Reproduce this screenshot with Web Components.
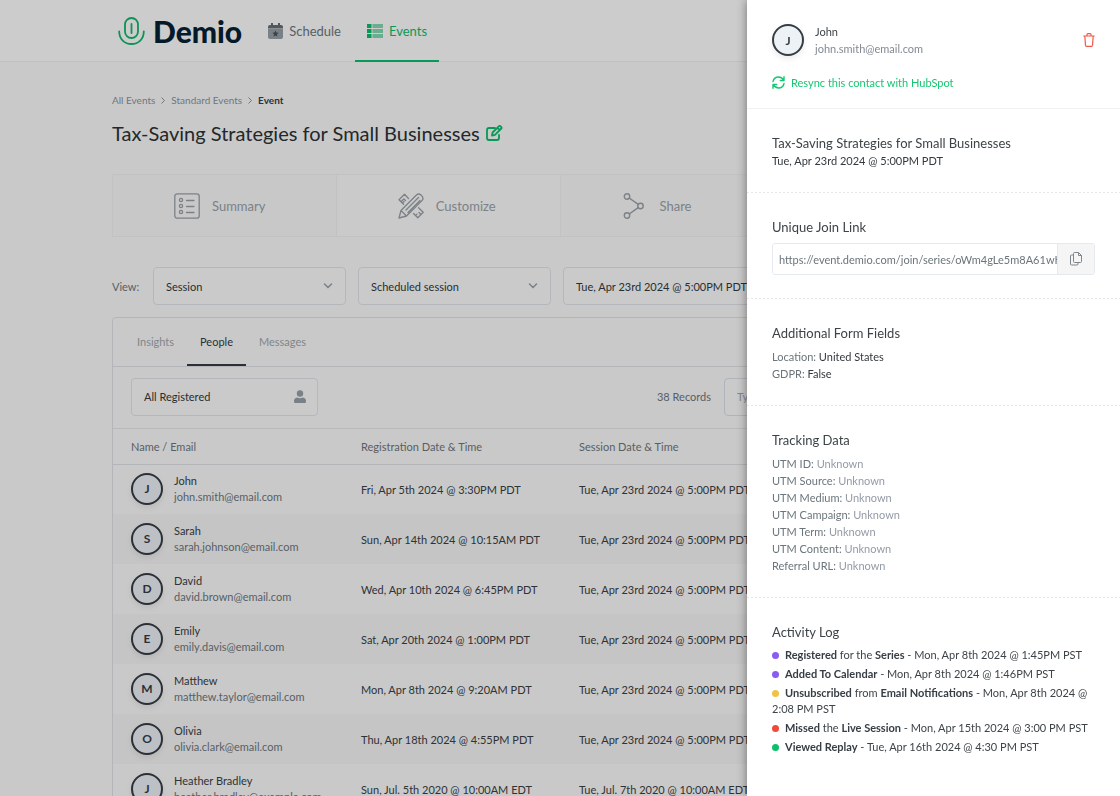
<!DOCTYPE html>
<html lang="en">
<head>
<meta charset="utf-8">
<meta name="viewport" content="width=device-width, initial-scale=1">
<title>Demio – Event</title>
<style>
html, body { margin: 0; height: 100%; }
body { font-family: Lato, "Open Sans", sans-serif; font-size: 11px; color: #3a4045; overflow: hidden; }
</style>
</head>
<body>
<demio-app></demio-app>

<script>
const define = (name, html, setup) => {
  const tpl = document.createElement('template');
  tpl.innerHTML = html;
  customElements.define(name, class extends HTMLElement {
    connectedCallback() {
      if (this.shadowRoot) return;
      const root = this.attachShadow({ mode: 'open' });
      root.append(tpl.content.cloneNode(true));
      if (setup) setup(this, root);
    }
  });
};

define('user-avatar', `
<style>
:host { display: flex; flex: none; align-items: center; justify-content: center; box-sizing: border-box; width: 32px; height: 32px; border: 2px solid #363d44; border-radius: 50%; background: #edf2f7; color: #363d44; font-size: 12px; font-weight: 700; box-shadow: 0 3px 6px rgba(0,0,0,.08); }
</style><slot></slot>`);

define('nav-tab', `
<style>
:host { display: flex; }
a { display: flex; align-items: center; gap: 6px; padding: 2px 12px 0; font-size: 13px; color: #6e777f; text-decoration: none; border-bottom: 2px solid transparent; }
:host([active]) a { color: #0bbf6d; border-color: #0bbf6d; }
</style>
<a href="#"><slot name="icon"></slot><slot></slot></a>`);

define('app-header', `
<style>
:host { display: block; background: #fff; border-bottom: 1px solid #f0f0f0; }
header { display: flex; height: 61px; padding: 0 10%; }
nav { display: flex; gap: 2px; margin: 0 0 -1px 14px; }
.logo { display: flex; align-items: center; gap: 8px; padding-left: 6px; color: #072134; font-size: 30px; font-weight: 900; text-decoration: none; }
</style>
<header>
  <a class="logo" href="#">
    <svg width="27" height="28" viewBox="0 0 27 28" fill="none" stroke="#10b96c" stroke-width="1.800" stroke-linecap="round"><rect x="7" y="1" width="13" height="20" rx="6.500"/><path d="M13.500 7v9M1.200 14.500C1.200 22 6.500 27 13.500 27S25.800 22 25.800 14.500"/></svg>
    <span>Demio</span>
  </a>
  <nav>
    <nav-tab>
      <svg slot="icon" width="15" height="16" viewBox="0 0 15 16"><path fill="#666e76" d="M2 2h1V0h2v2h5V0h2v2h1q2 0 2 2v1.500H0V4q0-2 2-2z"/><path fill="#98a0a8" d="M0 6h15v8q0 2-2 2H2q-2 0-2-2z"/><path fill="#4c545c" d="M7.500 7.600l.95 1.950 2.100.3-1.500 1.500.35 2.100-1.900-1-1.900 1 .35-2.100-1.500-1.500 2.100-.3z"/></svg>
      Schedule
    </nav-tab>
    <nav-tab active>
      <svg slot="icon" width="16" height="14" viewBox="0 0 16 14"><path fill="#0bbf6d" d="M0 0h4.500v4H0zM0 5h4.500v4H0zM0 10h4.500v4H0z"/><path fill="#86d9b3" d="M5.500 0H16v4H5.500zM5.500 5H16v4H5.500zM5.500 10H16v4H5.500z"/></svg>
      Events
    </nav-tab>
  </nav>
</header>`);

define('bread-crumbs', `
<style>
:host { display: block; font-size: 10px; line-height: 16px; color: #8d949c; }
nav { display: flex; align-items: center; gap: 6px; }
a { color: inherit; text-decoration: none; }
b { color: #3a4045; }
</style>
<nav aria-label="Breadcrumb">
  <a href="#">All Events</a>
  <svg width="4" height="7" viewBox="0 0 4 7" fill="none" stroke="#8d949c"><path d="M.5.5l3 3-3 3"/></svg>
  <a href="#">Standard Events</a>
  <svg width="4" height="7" viewBox="0 0 4 7" fill="none" stroke="#8d949c"><path d="M.5.5l3 3-3 3"/></svg>
  <b>Event</b>
</nav>`);

define('step-tile', `
<style>
:host { display: flex; flex: 1; min-width: 0; box-sizing: border-box; border-right: 1px solid #f3f3f4; background: #fafafa; }
:host([plain]) { background: #fdfdfd; }
:host(:last-of-type) { border-right: 0; }
a { flex: 1; display: flex; align-items: center; gap: 12px; min-width: 0; padding-left: 61px; color: #9ba2a9; font-size: 13px; text-decoration: none; }
</style>
<a href="#"><slot name="icon"></slot><slot></slot></a>`);

define('select-field', `
<style>
:host { display: grid; width: 193px; flex: none; }
select { grid-area: 1/1; appearance: none; box-sizing: border-box; width: 100%; height: 38px; padding: 0 12px; font: inherit; color: #33393e; background: #fdfdfd; border: 1px solid #e1e5ea; border-radius: 4px; }
.mark { grid-area: 1/1; justify-self: end; align-self: center; margin-right: 12px; pointer-events: none; display: flex; }
</style>
<select></select>
<span class="mark"><slot name="mark"><svg width="12" height="8" viewBox="0 0 12 8" fill="none" stroke="#9aa1a8" stroke-width="1.500" stroke-linecap="round"><path d="M2.500 2L6 5.500 9.500 2"/></svg></slot></span>`,
(host, root) => {
  const select = root.querySelector('select');
  select.setAttribute('aria-label', host.getAttribute('label'));
  select.add(new Option(host.getAttribute('value')));
});

define('people-table', `
<style>
:host { display: block; }
table { width: 100%; border-collapse: collapse; table-layout: fixed; }
th { height: 35px; padding: 0 0 0 18px; text-align: left; font-weight: 400; color: #6f777e; border-bottom: 1px solid #e1e3e6; }
th:first-child { width: 248px; } th:nth-child(2) { width: 218px; }
th:nth-child(n+2), td:nth-child(n+2) { padding-left: 0; }
th, td { box-sizing: border-box; }
td { height: 50px; padding: 0 0 0 18px; white-space: nowrap; }
td:last-child, th:last-child { padding-right: 18px; }
tbody tr:nth-child(even) { background: #f7f7f7; }
.who { display: flex; align-items: center; gap: 11px; line-height: 16px; }
.who span { display: block; color: #6f777e; }
</style>
<table>
  <thead><tr><th>Name / Email</th><th>Registration Date &amp; Time</th><th>Session Date &amp; Time</th></tr></thead>
  <tbody></tbody>
</table>`,
(host, root) => {
  const usual = 'Tue, Apr 23rd 2024 @ 5:00PM PDT';
  const people = [
    ['J', 'John', 'john.smith@email.com', 'Fri, Apr 5th 2024 @ 3:30PM PDT', usual],
    ['S', 'Sarah', 'sarah.johnson@email.com', 'Sun, Apr 14th 2024 @ 10:15AM PDT', usual],
    ['D', 'David', 'david.brown@email.com', 'Wed, Apr 10th 2024 @ 6:45PM PDT', usual],
    ['E', 'Emily', 'emily.davis@email.com', 'Sat, Apr 20th 2024 @ 1:00PM PDT', usual],
    ['M', 'Matthew', 'matthew.taylor@email.com', 'Mon, Apr 8th 2024 @ 9:20AM PDT', usual],
    ['O', 'Olivia', 'olivia.clark@email.com', 'Thu, Apr 18th 2024 @ 4:55PM PDT', usual],
    ['J', 'Heather Bradley', 'heather.bradley@example.com', 'Sun, Jul. 5th 2020 @ 10:00AM EDT', 'Tue, Jul. 7th 2020 @ 10:00AM EDT']
  ];
  root.querySelector('tbody').innerHTML = people.map(([i, name, mail, reg, ses]) =>
    `<tr><td><div class="who"><user-avatar>${i}</user-avatar><div>${name}<span>${mail}</span></div></div></td><td>${reg}</td><td>${ses}</td></tr>`).join('');
});

define('people-card', `
<style>
:host { display: block; border: 1px solid #e1e3e6; border-radius: 4px 4px 0 0; background: #fcfcfc; }
.tabs { display: flex; height: 48px; padding: 0 11px; border-bottom: 1px solid #e1e3e6; }
.tabs button { font: inherit; color: #a2a8ae; background: none; border: 0; border-bottom: 2px solid transparent; padding: 0 13px; margin: 0; }
.tabs .on { color: #363d44; border-color: #363d44; }
.filter { display: flex; align-items: center; gap: 13px; height: 59px; padding: 0 18px 2px; border-bottom: 1px solid #e6e8ea; }
select-field { width: 187px; margin-right: auto; }
.count { color: #6f777e; }
input { box-sizing: border-box; width: 265px; height: 38px; padding: 0 12px; font: inherit; background: #fdfdfd; border: 1px solid #dbe2ea; border-radius: 4px; }
input::placeholder { color: #a2a8ae; }
</style>
<div class="tabs" role="tablist"><button role="tab">Insights</button><button role="tab" class="on" aria-selected="true">People</button><button role="tab">Messages</button></div>
<div class="filter">
  <select-field label="Registration filter" value="All Registered"><svg slot="mark" width="12" height="14" viewBox="0 0 12 14" fill="#98a0aa"><circle cx="6" cy="3.500" r="3.200"/><path d="M3 7.500q3 1.500 6 0 3 .5 3 3.500v1q0 1-1 1H1q-1 0-1-1v-1q0-3 3-3.500z"/></svg></select-field>
  <span class="count">38 Records</span>
  <input type="search" aria-label="Search people" placeholder="Type to search">
</div>
<people-table></people-table>`);

define('event-page', `
<style>
:host { display: block; height: 100vh; overflow: hidden; background: #fcfcfc; }
main { padding: 30px 10% 0; }
h1 { display: flex; align-items: center; gap: 6px; margin: 13px 0 29px; font-size: 20px; line-height: 24px; font-weight: 400; color: #2b3237; }
.edit { display: flex; padding: 0; border: 0; background: none; }
.tiles { display: flex; height: 61px; border: 1px solid #f3f3f4; }
.view { display: flex; align-items: center; gap: 12px; margin: 30px 0 12px; }
.view span { width: 29px; white-space: nowrap; color: #6f777e; }
.view .date { width: 260px; }
</style>
<app-header></app-header>
<main>
  <bread-crumbs></bread-crumbs>
  <h1>Tax-Saving Strategies for Small Businesses
    <button class="edit" aria-label="Edit title"><svg width="17" height="16" viewBox="0 0 17 16" fill="none" stroke="#0bbf6d" stroke-width="1.800" stroke-linejoin="round" stroke-linecap="round"><path d="M9 3H3Q1 3 1 5v8q0 2 2 2h8q2 0 2-2v-3"/><path d="M6 10.500l.6-3L13 1.200q.7-.6 1.400 0l.9.9q.7.700 0 1.400L9 9.900zM11.500 2.800l2.300 2.300"/></svg></button>
  </h1>
  <div class="tiles">
    <step-tile><svg slot="icon" width="26" height="26" viewBox="0 0 26 26" fill="none" stroke="#9ba2a9" stroke-width="1.300" stroke-linecap="round"><rect x=".8" y=".8" width="24.400" height="24.400" rx="2.500"/><circle cx="7" cy="7" r="1.600"/><circle cx="7" cy="13" r="1.600"/><circle cx="7" cy="19" r="1.600"/><path d="M12.500 7.500H20M12.500 13.500H20M12.500 19.500H20"/></svg>Summary</step-tile>
    <step-tile plain><svg slot="icon" width="26" height="26" viewBox="0 0 26 26" fill="none" stroke="#9ba2a9" stroke-width="1.300" stroke-linejoin="round" stroke-linecap="round"><path d="M10.500 5.500L6.500 1.200 1 6.700l4.600 4.600M15.500 20.500l4.300 4.300 5.400-5.500-4.600-4.500M3 8.800l2.300-2.300M4.500 10l1.500-1.500M6 6l1.500 1.500M17.800 22.300l1.200-1.200M20 24.500l1.800-1.800M21 19.500l1.500 1.500"/><path d="M1 25l2-7.500L18.700 1.800q2-1.600 4 0l1.500 1.600q1.600 2 0 4L8.500 23zM3 17.500l5.500 5.500M8 17L20.500 4.500M10 19.500L22 7.500"/></svg>Customize</step-tile>
    <step-tile><svg slot="icon" width="26" height="26" viewBox="0 0 26 26" fill="none" stroke="#9ba2a9" stroke-width="1.400"><circle cx="5" cy="3.500" r="2.700"/><circle cx="18.500" cy="13" r="2.700"/><circle cx="5" cy="22.500" r="2.700"/><path d="M7.200 5l9 6.400M7.200 21l9-6.400"/></svg>Share</step-tile>
    <step-tile plain>Analyze</step-tile>
  </div>
  <div class="view">
    <span>View:</span>
    <select-field label="View" value="Session"></select-field>
    <select-field label="Session type" value="Scheduled session"></select-field>
    <select-field class="date" label="Session date" value="Tue, Apr 23rd 2024 @ 5:00PM PDT"></select-field>
  </div>
  <people-card></people-card>
</main>`);

define('drawer-section', `
<style>
:host { display: block; padding: 25px 25px 24px; line-height: 17px; color: #6b757b; background: repeating-linear-gradient(90deg, #e6e7e9 0 2px, transparent 2px 4px) bottom / 100% 1px no-repeat; }
:host(:last-of-type) { background: none; }
h2 { margin: 0 0 6px; font-size: 13px; line-height: 18px; font-weight: 400; color: #3d4448; }
:host([tight]) h2 { margin: 0; }
</style>
<h2><slot name="title"></slot></h2><slot></slot>`);

define('copy-field', `
<style>
:host { display: flex; height: 32px; box-sizing: border-box; margin-top: 7px; border: 1px solid #e4eaef; border-radius: 3px; overflow: hidden; }
input { flex: 1; min-width: 0; padding: 0 0 0 6px; border: 0; font: inherit; color: #6b757b; background: #fff; }
button { width: 37px; padding: 0; border: 0; border-left: 1px solid #e4eaef; background: #f5f5f6; display: flex; align-items: center; justify-content: center; }
</style>
<input aria-label="Unique Join Link" readonly value="https://event.demio.com/join/series/oWm4gLe5m8A61wKq">
<button aria-label="Copy link"><svg width="12" height="14" viewBox="0 0 12 14" fill="none" stroke="#7f868c" stroke-linejoin="round"><path d="M3.500 1.500q0-1 1-1h4l3 3v6q0 1-1 1h-6q-1 0-1-1zM8.500.5v3h3"/><path d="M3.500 3h-2q-1 0-1 1v8q0 1 1 1h5.500q1 0 1-1v-1.500"/></svg></button>`);

define('log-entry', `
<style>
:host { display: block; line-height: 16px; margin: 0 0 3px; color: #3d4448; }
i { display: inline-block; width: 7px; height: 7px; margin-right: 6px; border-radius: 50%; background: var(--dot); }
::slotted(b) { color: #363d44; }
</style><i></i><slot></slot>`);

define('contact-drawer', `
<style>
:host { position: fixed; top: 0; right: 0; bottom: 0; box-sizing: border-box; width: 373px; overflow: hidden; background: #fff; box-shadow: 0 0 10px rgba(0,0,0,.45); }
.top { padding: 23px 25px 17px; border-bottom: 1px solid #f0f1f2; }
.who { display: flex; align-items: center; gap: 11px; line-height: 17px; color: #3d4448; }
.who span { display: block; color: #838a93; }
.trash { margin-left: auto; padding: 0; border: 0; background: none; display: flex; }
.sync { display: flex; align-items: center; gap: 6px; margin-top: 17px; line-height: 17px; color: #17c671; text-decoration: none; }
p { margin: 0; }
.dark, em { font-style: normal; color: #33393e; }
.none { color: #949ba6; }
</style>
<div class="top">
  <div class="who"><user-avatar>J</user-avatar><div>John<span>john.smith@email.com</span></div>
    <button class="trash" aria-label="Delete contact"><svg width="12" height="14" viewBox="0 0 12 14" fill="none" stroke="#f2574b" stroke-width="1.200" stroke-linejoin="round" stroke-linecap="round"><path d="M.8 3h10.400M4 3V1.500q0-.9.900-.9h2.200q.9 0 .9.900V3M1.800 3l.7 9.400q.1.900 1 .9h5q.9 0 1-.9L10.200 3"/></svg></button>
  </div>
  <a class="sync" href="#"><svg width="13" height="13" viewBox="0 0 13 13" fill="none" stroke="#17c671" stroke-width="1.400" stroke-linejoin="round" stroke-linecap="round"><path d="M1 5.500Q2 1 6.500 1 9.500 1 12 4.200M12 .8v3.700H8.300M12 7.500Q11 12 6.500 12 3.500 12 1 8.800M1 12.200V8.500h3.700"/></svg>Resync this contact with HubSpot</a>
</div>
<drawer-section tight><span slot="title">Tax-Saving Strategies for Small Businesses</span><p class="dark">Tue, Apr 23rd 2024 @ 5:00PM PDT</p></drawer-section>
<drawer-section><span slot="title">Unique Join Link</span><copy-field></copy-field></drawer-section>
<drawer-section><span slot="title">Additional Form Fields</span><p>Location: <em>United States</em></p><p>GDPR: <em>False</em></p></drawer-section>
<drawer-section><span slot="title">Tracking Data</span>
  <p>UTM ID: <span class="none">Unknown</span></p>
  <p>UTM Source: <span class="none">Unknown</span></p>
  <p>UTM Medium: <span class="none">Unknown</span></p>
  <p>UTM Campaign: <span class="none">Unknown</span></p>
  <p>UTM Term: <span class="none">Unknown</span></p>
  <p>UTM Content: <span class="none">Unknown</span></p>
  <p>Referral URL: <span class="none">Unknown</span></p>
</drawer-section>
<drawer-section><span slot="title">Activity Log</span>
  <log-entry style="--dot:#8a5cf0"><b>Registered</b> for the <b>Series</b> - Mon, Apr 8th 2024 @ 1:45PM PST</log-entry>
  <log-entry style="--dot:#8a5cf0"><b>Added To Calendar</b> - Mon, Apr 8th 2024 @ 1:46PM PST</log-entry>
  <log-entry style="--dot:#efc445"><b>Unsubscribed</b> from <b>Email Notifications</b> - Mon, Apr 8th 2024 @ 2:08 PM PST</log-entry>
  <log-entry style="--dot:#f04a38"><b>Missed</b> the <b>Live Session</b> - Mon, Apr 15th 2024 @ 3:00 PM PST</log-entry>
  <log-entry style="--dot:#0bc06c"><b>Viewed Replay</b> - Tue, Apr 16th 2024 @ 4:30 PM PST</log-entry>
</drawer-section>`);

define('demio-app', `
<style>
:host { display: block; }
.scrim { position: fixed; inset: 0; background: rgba(0,0,0,.2); }
</style>
<event-page></event-page>
<div class="scrim"></div>
<contact-drawer role="dialog" aria-label="Contact details"></contact-drawer>`);
</script>
</body>
</html>
